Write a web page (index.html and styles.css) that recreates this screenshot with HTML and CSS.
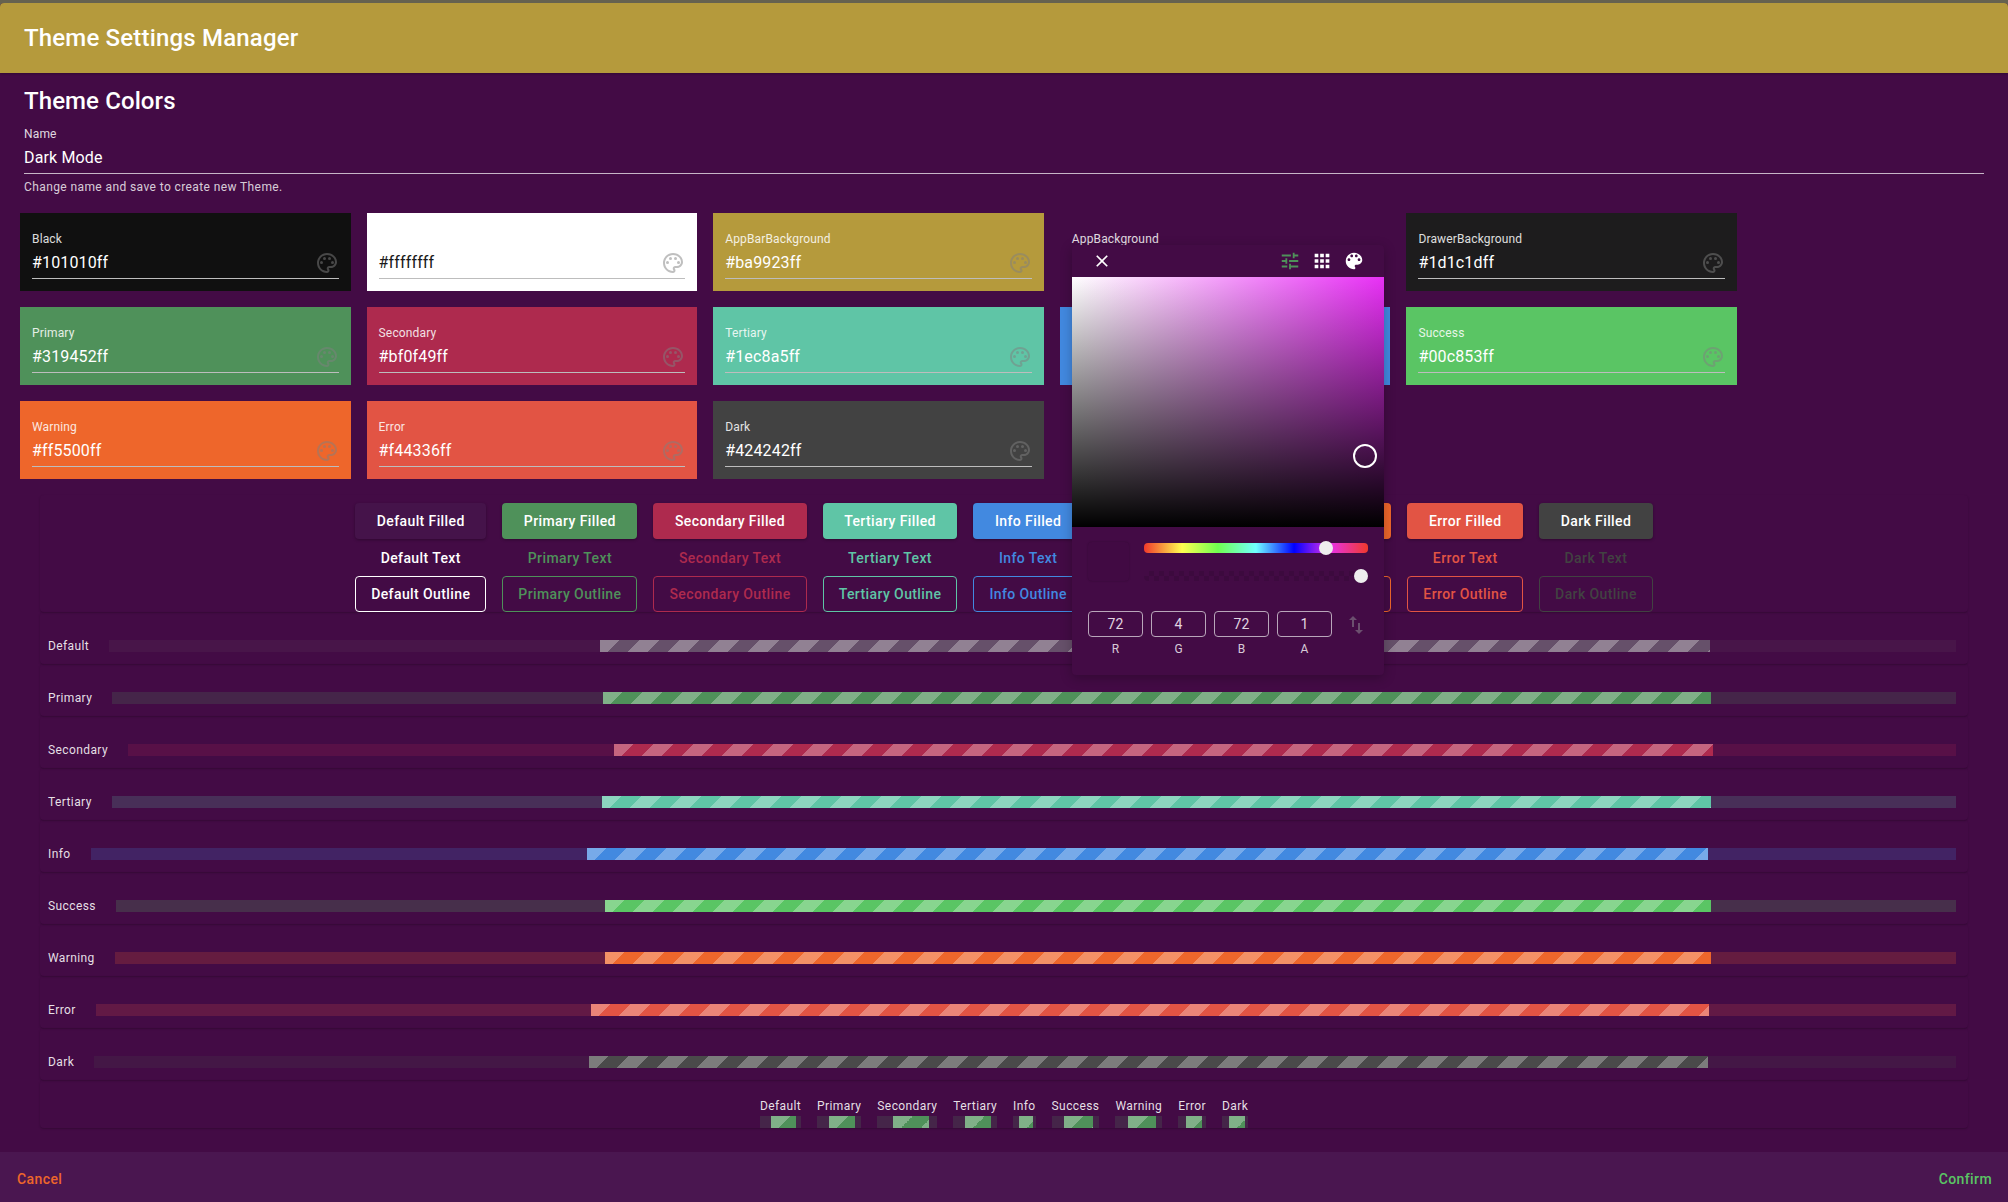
FILE: index.html
```html
<!DOCTYPE html>
<html lang="en">
<head>
    <meta charset="UTF-8">
    <title>Theme Settings Manager</title>
    <link rel="stylesheet" href="styles.css">
</head>
<body>
    <svg class="defs" width="0" height="0">
        <symbol id="palette-outline" viewBox="0 0 24 24">
            <path d="M12 22C6.49 22 2 17.51 2 12S6.49 2 12 2s10 4.04 10 9c0 3.31-2.69 6-6 6h-1.77c-.28 0-.5.22-.5.5 0 .12.05.23.13.33.41.47.64 1.06.64 1.67 0 1.38-1.12 2.5-2.5 2.5zm0-18c-4.41 0-8 3.59-8 8s3.59 8 8 8c.28 0 .5-.22.5-.5 0-.16-.08-.28-.14-.35-.41-.46-.63-1.05-.63-1.65 0-1.38 1.12-2.5 2.5-2.5H16c2.21 0 4-1.79 4-4 0-3.86-3.59-7-8-7z"/>
            <circle cx="6.5" cy="11.5" r="1.5"/>
            <circle cx="9.5" cy="7.5" r="1.5"/>
            <circle cx="14.5" cy="7.5" r="1.5"/>
            <circle cx="17.5" cy="11.5" r="1.5"/>
        </symbol>
    </svg>

    <div class="dialog">
        <header class="appbar">Theme Settings Manager</header>

        <main class="content">
            <h1 class="section-title">Theme Colors</h1>

            <div class="name-field">
                <label class="field-label">Name</label>
                <div class="name-value">Dark Mode</div>
                <div class="helper">Change name and save to create new Theme.</div>
            </div>

            <div class="card-grid">
                <div class="card card-black"><span class="card-label">Black</span><div class="card-input"><span>#101010ff</span><svg class="palette"><use href="#palette-outline"/></svg></div></div>
                <div class="card card-white"><span class="card-label"></span><div class="card-input"><span>#ffffffff</span><svg class="palette"><use href="#palette-outline"/></svg></div></div>
                <div class="card card-appbar"><span class="card-label">AppBarBackground</span><div class="card-input"><span>#ba9923ff</span><svg class="palette"><use href="#palette-outline"/></svg></div></div>
                <div class="card card-appbg"><span class="card-label">AppBackground</span><div class="card-input"><span>#480448ff</span><svg class="palette"><use href="#palette-outline"/></svg></div></div>
                <div class="card card-drawer"><span class="card-label">DrawerBackground</span><div class="card-input"><span>#1d1c1dff</span><svg class="palette"><use href="#palette-outline"/></svg></div></div>
                <div class="card c-primary"><span class="card-label">Primary</span><div class="card-input"><span>#319452ff</span><svg class="palette"><use href="#palette-outline"/></svg></div></div>
                <div class="card c-secondary"><span class="card-label">Secondary</span><div class="card-input"><span>#bf0f49ff</span><svg class="palette"><use href="#palette-outline"/></svg></div></div>
                <div class="card c-tertiary"><span class="card-label">Tertiary</span><div class="card-input"><span>#1ec8a5ff</span><svg class="palette"><use href="#palette-outline"/></svg></div></div>
                <div class="card c-info"><span class="card-label">Info</span><div class="card-input"><span>#2196f3ff</span><svg class="palette"><use href="#palette-outline"/></svg></div></div>
                <div class="card c-success"><span class="card-label">Success</span><div class="card-input"><span>#00c853ff</span><svg class="palette"><use href="#palette-outline"/></svg></div></div>
                <div class="card c-warning"><span class="card-label">Warning</span><div class="card-input"><span>#ff5500ff</span><svg class="palette"><use href="#palette-outline"/></svg></div></div>
                <div class="card c-error"><span class="card-label">Error</span><div class="card-input"><span>#f44336ff</span><svg class="palette"><use href="#palette-outline"/></svg></div></div>
                <div class="card c-dark"><span class="card-label">Dark</span><div class="card-input"><span>#424242ff</span><svg class="palette"><use href="#palette-outline"/></svg></div></div>
            </div>

            <section class="paper button-paper">
                <div class="btn-group c-default"><button class="btn filled">Default Filled</button><button class="btn text">Default Text</button><button class="btn outline">Default Outline</button></div>
                <div class="btn-group c-primary"><button class="btn filled">Primary Filled</button><button class="btn text">Primary Text</button><button class="btn outline">Primary Outline</button></div>
                <div class="btn-group c-secondary"><button class="btn filled">Secondary Filled</button><button class="btn text">Secondary Text</button><button class="btn outline">Secondary Outline</button></div>
                <div class="btn-group c-tertiary"><button class="btn filled">Tertiary Filled</button><button class="btn text">Tertiary Text</button><button class="btn outline">Tertiary Outline</button></div>
                <div class="btn-group c-info"><button class="btn filled">Info Filled</button><button class="btn text">Info Text</button><button class="btn outline">Info Outline</button></div>
                <div class="btn-group c-success"><button class="btn filled">Success Filled</button><button class="btn text">Success Text</button><button class="btn outline">Success Outline</button></div>
                <div class="btn-group c-warning"><button class="btn filled">Warning Filled</button><button class="btn text">Warning Text</button><button class="btn outline">Warning Outline</button></div>
                <div class="btn-group c-error"><button class="btn filled">Error Filled</button><button class="btn text">Error Text</button><button class="btn outline">Error Outline</button></div>
                <div class="btn-group c-dark"><button class="btn filled">Dark Filled</button><button class="btn text">Dark Text</button><button class="btn outline">Dark Outline</button></div>
            </section>

            <section class="paper chart-row c-bar-default"><span class="chart-label">Default</span><div class="track"><div class="fill"></div></div></section>
            <section class="paper chart-row c-primary"><span class="chart-label">Primary</span><div class="track"><div class="fill"></div></div></section>
            <section class="paper chart-row c-secondary"><span class="chart-label">Secondary</span><div class="track"><div class="fill"></div></div></section>
            <section class="paper chart-row c-tertiary"><span class="chart-label">Tertiary</span><div class="track"><div class="fill"></div></div></section>
            <section class="paper chart-row c-info"><span class="chart-label">Info</span><div class="track"><div class="fill"></div></div></section>
            <section class="paper chart-row c-success"><span class="chart-label">Success</span><div class="track"><div class="fill"></div></div></section>
            <section class="paper chart-row c-warning"><span class="chart-label">Warning</span><div class="track"><div class="fill"></div></div></section>
            <section class="paper chart-row c-error"><span class="chart-label">Error</span><div class="track"><div class="fill"></div></div></section>
            <section class="paper chart-row c-bar-dark"><span class="chart-label">Dark</span><div class="track"><div class="fill"></div></div></section>

            <section class="paper legend c-primary">
                <div class="legend-item"><span class="chart-label">Default</span><div class="track"><div class="fill"></div></div></div>
                <div class="legend-item"><span class="chart-label">Primary</span><div class="track"><div class="fill"></div></div></div>
                <div class="legend-item"><span class="chart-label">Secondary</span><div class="track"><div class="fill"></div></div></div>
                <div class="legend-item"><span class="chart-label">Tertiary</span><div class="track"><div class="fill"></div></div></div>
                <div class="legend-item"><span class="chart-label">Info</span><div class="track"><div class="fill"></div></div></div>
                <div class="legend-item"><span class="chart-label">Success</span><div class="track"><div class="fill"></div></div></div>
                <div class="legend-item"><span class="chart-label">Warning</span><div class="track"><div class="fill"></div></div></div>
                <div class="legend-item"><span class="chart-label">Error</span><div class="track"><div class="fill"></div></div></div>
                <div class="legend-item"><span class="chart-label">Dark</span><div class="track"><div class="fill"></div></div></div>
            </section>
        </main>

        <footer class="actions">
            <button class="action cancel">Cancel</button>
            <button class="action confirm">Confirm</button>
        </footer>
    </div>

    <!-- picker popover, open over the AppBackground field -->
    <div class="picker">
        <div class="picker-bar">
            <svg class="picker-close" viewBox="0 0 24 24"><path d="M19 6.41L17.59 5 12 10.59 6.41 5 5 6.41 10.59 12 5 17.59 6.41 19 12 13.41 17.59 19 19 17.59 13.41 12z"/></svg>
            <div class="picker-tabs">
                <svg class="tab-icon tab-active" viewBox="0 0 24 24"><path d="M3 17v2h6v-2H3zM3 5v2h10V5H3zm10 16v-2h8v-2h-8v-2h-2v6h2zM7 9v2H3v2h4v2h2V9H7zm14 4v-2H11v2h10zm-6-4h2V7h4V5h-4V3h-2v6z"/></svg>
                <svg class="tab-icon" viewBox="0 0 24 24"><path d="M4 8h4V4H4v4zm6 12h4v-4h-4v4zm-6 0h4v-4H4v4zm0-6h4v-4H4v4zm6 0h4v-4h-4v4zm6-10v4h4V4h-4zm-6 4h4V4h-4v4zm6 6h4v-4h-4v4zm0 6h4v-4h-4v4z"/></svg>
                <svg class="tab-icon" viewBox="0 0 24 24"><path d="M12 3c-4.97 0-9 4.03-9 9s4.03 9 9 9c.83 0 1.5-.67 1.5-1.5 0-.39-.15-.74-.39-1.01-.23-.26-.38-.61-.38-.99 0-.83.67-1.5 1.5-1.5H16c2.76 0 5-2.24 5-5 0-4.42-4.03-8-9-8zm-5.5 9c-.83 0-1.5-.67-1.5-1.5S5.67 9 6.5 9 8 9.67 8 10.5 7.33 12 6.5 12zm3-4C8.67 8 8 7.33 8 6.5S8.67 5 9.5 5s1.5.67 1.5 1.5S10.33 8 9.5 8zm5 0c-.83 0-1.5-.67-1.5-1.5S13.67 5 14.5 5s1.5.67 1.5 1.5S15.33 8 14.5 8zm3 4c-.83 0-1.5-.67-1.5-1.5S16.67 9 17.5 9s1.5.67 1.5 1.5-.67 1.5-1.5 1.5z"/></svg>
            </div>
        </div>
        <div class="color-area"><span class="color-cursor"></span></div>
        <div class="slider-row">
            <div class="swatch"></div>
            <div class="sliders">
                <div class="slider hue"><span class="thumb thumb-hue"></span></div>
                <div class="slider alpha"><span class="thumb thumb-alpha"></span></div>
            </div>
        </div>
        <div class="rgba-row">
            <div class="rgba-field"><div class="rgba-input">72</div><div class="rgba-label">R</div></div>
            <div class="rgba-field"><div class="rgba-input">4</div><div class="rgba-label">G</div></div>
            <div class="rgba-field"><div class="rgba-input">72</div><div class="rgba-label">B</div></div>
            <div class="rgba-field"><div class="rgba-input">1</div><div class="rgba-label">A</div></div>
            <svg class="swap-icon" viewBox="0 0 24 24"><path d="M16 17.01V10h-2v7.01h-3L15 21l4-3.99h-3zM9 3L5 6.99h3V14h2V6.99h3L9 3z"/></svg>
        </div>
    </div>
</body>
</html>
```

FILE: styles.css
```css
* {
    box-sizing: border-box;
}

html, body {
    margin: 0;
    height: 100%;
    overflow: hidden;
}

body {
    font-family: Roboto, "Liberation Sans", sans-serif;
    background-color: #66624f;
    color: #fff;
    position: relative;
}

.defs {
    position: absolute;
}

/* colors as they show on screen */
.c-default { --c: #ffffff; }
.c-bar-default { --c: #66506a; }
.c-primary { --c: #4f915a; }
.c-secondary { --c: #ae2a4e; }
.c-tertiary { --c: #5fc5a6; }
.c-info { --c: #4289e0; }
.c-success { --c: #5ac564; }
.c-warning { --c: #ee662b; }
.c-error { --c: #e25444; }
.c-dark { --c: #424242; }
.c-bar-dark { --c: #4a4a4a; }

.dialog {
    display: flex;
    flex-direction: column;
    height: 1199px;
    margin-top: 3px;
    background-color: #430b45;
    border-radius: 4px 4px 0 0;
    overflow: hidden;
}

.appbar {
    height: 70px;
    flex-shrink: 0;
    display: flex;
    align-items: center;
    padding: 0 24px;
    background-color: #b59a3c;
    font-size: 24px;
    font-weight: 500;
    letter-spacing: 0.18px;
    box-shadow: 0 1px 2px rgba(0,0,0,0.25);
}

.content {
    height: 1079px;
    flex-shrink: 0;
    padding: 11px 24px 0;
}

.section-title {
    margin: 1px 0 0;
    font-size: 24px;
    font-weight: 500;
    line-height: 32px;
    letter-spacing: 0.1px;
}

.name-field {
    margin-top: 9px;
}

.field-label {
    display: block;
    font-size: 12px;
    line-height: 16px;
    letter-spacing: 0.15px;
    color: rgba(255,255,255,0.85);
}

.name-value {
    margin-top: 4px;
    padding-bottom: 3px;
    border-bottom: 1px solid rgba(255,255,255,0.7);
    font-size: 16px;
    line-height: 24px;
    letter-spacing: 0.15px;
}

.helper {
    font-size: 12px;
    line-height: 20px;
    letter-spacing: 0.4px;
    padding-top: 3px;
    color: rgba(255,255,255,0.8);
}

.card-grid {
    display: grid;
    grid-template-columns: repeat(5, 330.6px);
    gap: 16px;
    margin: 16px 0 0 -4px;
}

.card {
    height: 78px;
    padding: 18px 12px 0;
    background-color: var(--c);
}

.card-black { background-color: #101010; }
.card-white { background-color: #fff; color: #1a1a1a; }
.card-appbar { background-color: #b59a3c; }
.card-appbg { background-color: #430b45; }
.card-drawer { background-color: #1d1c1d; }

.card-label {
    display: block;
    height: 16px;
    font-size: 12px;
    line-height: 16px;
    letter-spacing: 0.15px;
    opacity: 0.85;
}

.card-input {
    display: flex;
    justify-content: space-between;
    align-items: center;
    margin-top: 4px;
    padding-bottom: 3px;
    border-bottom: 1px solid #bdbdbd;
    font-size: 16px;
    line-height: 24px;
    letter-spacing: 0.15px;
}

.palette {
    width: 24px;
    height: 24px;
    fill: #808080;
    opacity: 0.5;
}

.paper {
    margin-left: 16px;
    margin-right: 16px;
    border-radius: 4px;
    box-shadow: 0 1px 2px rgba(0,0,0,0.22);
}

.button-paper {
    display: flex;
    justify-content: center;
    gap: 16px;
    margin-top: 16px;
    padding-top: 8px;
}

.btn-group {
    display: flex;
    flex-direction: column;
}

.btn {
    height: 36px;
    padding: 0 16px;
    font-family: inherit;
    font-size: 14px;
    font-weight: 500;
    letter-spacing: 0.4px;
    white-space: nowrap;
    border-radius: 4px;
    border: none;
    background: none;
    color: var(--c);
}

.filled {
    background-color: var(--c);
    color: #fff;
    box-shadow: 0 1px 3px rgba(0,0,0,0.3);
}

.text {
    margin-top: 1px;
}

.outline {
    padding: 0 15px;
    border: 1px solid var(--c);
}

.c-default .filled {
    background-color: #45134a;
}

.chart-row {
    display: flex;
    align-items: center;
    gap: 20px;
    height: 52px;
    padding: 24px 12px 8px 8px;
}

.chart-label {
    font-size: 12px;
    line-height: 20px;
    letter-spacing: 0.4px;
    color: rgba(255,255,255,0.88);
    white-space: nowrap;
}

.track {
    flex: 1;
    height: 12px;
    background-color: color-mix(in srgb, var(--c) 20%, transparent);
}

.c-bar-default .track {
    background-color: #481549;
}

.fill {
    width: 60.1%;
    height: 100%;
    margin-left: 26.6%;
    background-color: var(--c);
    background-image: linear-gradient(135deg, rgba(255,255,255,0.28) 25%, transparent 25%, transparent 50%, rgba(255,255,255,0.28) 50%, rgba(255,255,255,0.28) 75%, transparent 75%);
    background-size: 40px 40px;
}

.legend {
    display: flex;
    justify-content: center;
    gap: 16px;
    height: 48px;
    padding-top: 15px;
}

.legend-item .track {
    flex: none;
}

.actions {
    flex: 1;
    display: flex;
    justify-content: space-between;
    align-items: center;
    padding: 3px 8px 0 9px;
    background-color: #4a1650;
}

.action {
    padding: 6px 8px;
    border: none;
    background: none;
    font-family: inherit;
    font-size: 14px;
    font-weight: 500;
    letter-spacing: 0.4px;
}

.cancel { color: #ee662b; }
.confirm { color: #5ac564; }

/* picker popover */
.picker {
    position: absolute;
    left: 1072px;
    top: 245px;
    width: 312px;
    height: 430px;
    background-color: #430b45;
    border-radius: 4px;
    box-shadow: 0 3px 12px rgba(0,0,0,0.25);
}

.picker-bar {
    display: flex;
    justify-content: space-between;
    align-items: center;
    height: 32px;
    padding: 0 19px 0 20px;
}

.picker-close {
    width: 20px;
    height: 20px;
    fill: #fff;
}

.picker-tabs {
    display: flex;
    gap: 10px;
}

.tab-icon {
    width: 22px;
    height: 22px;
    fill: #fff;
}

.tab-active {
    fill: #4f915a;
}

.color-area {
    position: relative;
    height: 250px;
    background: linear-gradient(to top, #000, transparent), linear-gradient(to right, #fff, #e830f5);
}

.color-cursor {
    position: absolute;
    left: 281px;
    top: 167px;
    width: 24px;
    height: 24px;
    border: 2px solid #fff;
    border-radius: 50%;
}

.slider-row {
    display: flex;
    padding: 15px 16px 0;
}

.swatch {
    width: 41px;
    height: 39px;
    border-radius: 4px;
    background-color: #410a43;
    box-shadow: 0 0 2px rgba(0,0,0,0.25);
}

.sliders {
    display: flex;
    flex-direction: column;
    gap: 18px;
    width: 224px;
    margin: 1px 0 0 15px;
}

.slider {
    position: relative;
    height: 10px;
    border-radius: 4px;
}

.hue {
    background: linear-gradient(to right, #f0392b, #ffff50 17%, #70ff50 33%, #70ffff 50%, #0000ff 67%, #e832e8 83%, #f0392b);
}

.alpha {
    background: repeating-conic-gradient(rgba(0,0,0,0.1) 0 25%, transparent 0 50%) 0 0 / 10px 10px;
}

.thumb {
    position: absolute;
    top: -2px;
    width: 14px;
    height: 14px;
    border-radius: 50%;
    background-color: #eee;
}

.thumb-hue { left: 175px; }
.thumb-alpha { left: 210px; }

.rgba-row {
    display: flex;
    gap: 8px;
    padding: 30px 16px 0;
}

.rgba-field {
    width: 55px;
    text-align: center;
}

.rgba-input {
    height: 26px;
    line-height: 24px;
    font-size: 14px;
    letter-spacing: 0.15px;
    color: #e0d4e0;
    border: 1px solid #b9a6ba;
    border-radius: 4px;
}

.rgba-label {
    margin-top: 4px;
    font-size: 12px;
    line-height: 16px;
    color: rgba(255,255,255,0.8);
}

.swap-icon {
    width: 24px;
    height: 24px;
    margin: 2px 0 0 4px;
    fill: #6b4f6e;
}
```
